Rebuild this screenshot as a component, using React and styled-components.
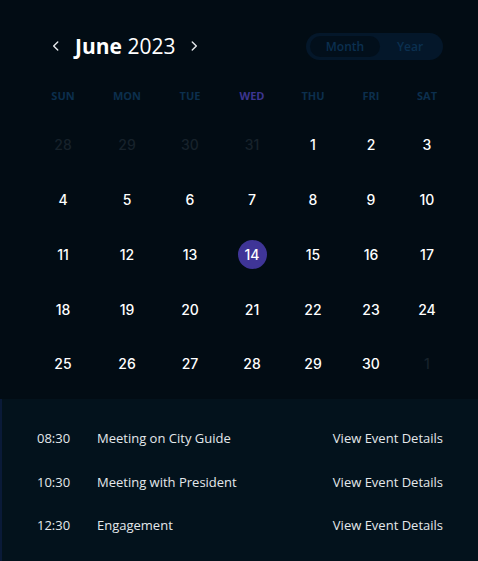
import React from 'react'
import styled, { createGlobalStyle } from 'styled-components'

const Global = createGlobalStyle`
  html, body {
    margin: 0;
    padding: 0;
    background: #020c14;
  }
  body {
    font-family: "Open Sans", "Noto Sans", sans-serif;
  }
`

const Page = styled.div`
  width: 478px;
  height: 561px;
  background: #020c14;
  display: flex;
  flex-direction: column;
  overflow: hidden;
`

const Header = styled.div`
  display: flex;
  align-items: center;
  justify-content: space-between;
  padding: 31px 35px 0 49px;
  height: 30px;
`

const MonthNav = styled.div`
  display: flex;
  align-items: center;
  gap: 8px;
  color: #ffffff;
`

const Arrow = styled.button`
  background: none;
  border: none;
  padding: 0;
  color: #e6e9ec;
  display: flex;
  align-items: center;
  cursor: pointer;
`

const Title = styled.div`
  font-size: 21px;
  color: #ffffff;
  margin: 0 4px;
  b {
    font-weight: 700;
  }
`

const Toggle = styled.div`
  display: flex;
  align-items: center;
  background: #04172a;
  border-radius: 14px;
  height: 27px;
  width: 137px;
  padding: 0 4px;
  box-sizing: border-box;
`

const ToggleItem = styled.div`
  flex: 0 0 ${p => (p.$active ? '70px' : '60px')};
  height: 21px;
  border-radius: 11px;
  background: ${p => (p.$active ? '#020f1b' : 'transparent')};
  color: #0b3050;
  font-size: 12px;
  font-weight: 600;
  display: flex;
  align-items: center;
  justify-content: center;
`

const Grid = styled.div`
  display: grid;
  grid-template-columns: 64px 64px 62px 62px 60px 56px 56px;
  grid-template-rows: 36.6px repeat(5, 54.75px);
  margin: 20px 0 8px 31px;
  font-family: "Inter", "Noto Sans", sans-serif;
`

const WeekDay = styled.div`
  height: 28px;
  display: flex;
  align-items: center;
  justify-content: center;
  font-family: "Open Sans", sans-serif;
  font-size: 11px;
  font-weight: 700;
  color: ${p => (p.$today ? '#3d3590' : '#0c2f4d')};
  align-self: start;
`

const Day = styled.div`
  display: flex;
  align-items: center;
  justify-content: center;
  font-size: 14px;
  font-weight: 500;
  color: ${p => (p.$muted ? '#17222b' : '#ffffff')};
`

const TodayMark = styled.span`
  width: 29px;
  height: 29px;
  border-radius: 50%;
  background: #3f3597;
  display: flex;
  align-items: center;
  justify-content: center;
`

const Events = styled.div`
  flex: 1;
  background: #03121c;
  border-left: 2px solid #0a1a38;
  padding: 17px 0 0 35px;
`

const EventRow = styled.div`
  display: flex;
  align-items: center;
  height: 43.5px;
  font-size: 13px;
  color: #e4e8eb;
`

const Time = styled.span`
  width: 60px;
`

const Name = styled.span`
  flex: 1;
`

const Details = styled.a`
  margin-right: 35px;
  color: #e4e8eb;
  cursor: pointer;
`

const Chevron = ({ dir }) => (
  <svg width="14" height="14" viewBox="0 0 24 24" fill="none" stroke="currentColor" strokeWidth="2.4" strokeLinecap="round" strokeLinejoin="round">
    {dir === 'left' ? <path d="M15 5l-7 7 7 7" /> : <path d="M9 5l7 7-7 7" />}
  </svg>
)

const weekdays = ['SUN', 'MON', 'TUE', 'WED', 'THU', 'FRI', 'SAT']

const days = [
  ...[28, 29, 30, 31].map(d => ({ d, muted: true })),
  ...Array.from({ length: 30 }, (_, i) => ({ d: i + 1 })),
  { d: 1, muted: true },
]

const events = [
  { time: '08:30', name: 'Meeting on City Guide' },
  { time: '10:30', name: 'Meeting with President' },
  { time: '12:30', name: 'Engagement' },
]

const App = () => {
  return (
    <Page>
      <Global />
      <Header>
        <MonthNav>
          <Arrow><Chevron dir="left" /></Arrow>
          <Title><b>June</b> 2023</Title>
          <Arrow><Chevron dir="right" /></Arrow>
        </MonthNav>
        <Toggle>
          <ToggleItem $active>Month</ToggleItem>
          <ToggleItem>Year</ToggleItem>
        </Toggle>
      </Header>
      <Grid>
        {weekdays.map(w => (
          <WeekDay key={w} $today={w === 'WED'}>{w}</WeekDay>
        ))}
        {days.map((x, i) => (
          <Day key={i} $muted={x.muted}>
            {!x.muted && x.d === 14 ? <TodayMark>14</TodayMark> : x.d}
          </Day>
        ))}
      </Grid>
      <Events>
        {events.map(e => (
          <EventRow key={e.time}>
            <Time>{e.time}</Time>
            <Name>{e.name}</Name>
            <Details>View Event Details</Details>
          </EventRow>
        ))}
      </Events>
    </Page>
  )
}

export default App
